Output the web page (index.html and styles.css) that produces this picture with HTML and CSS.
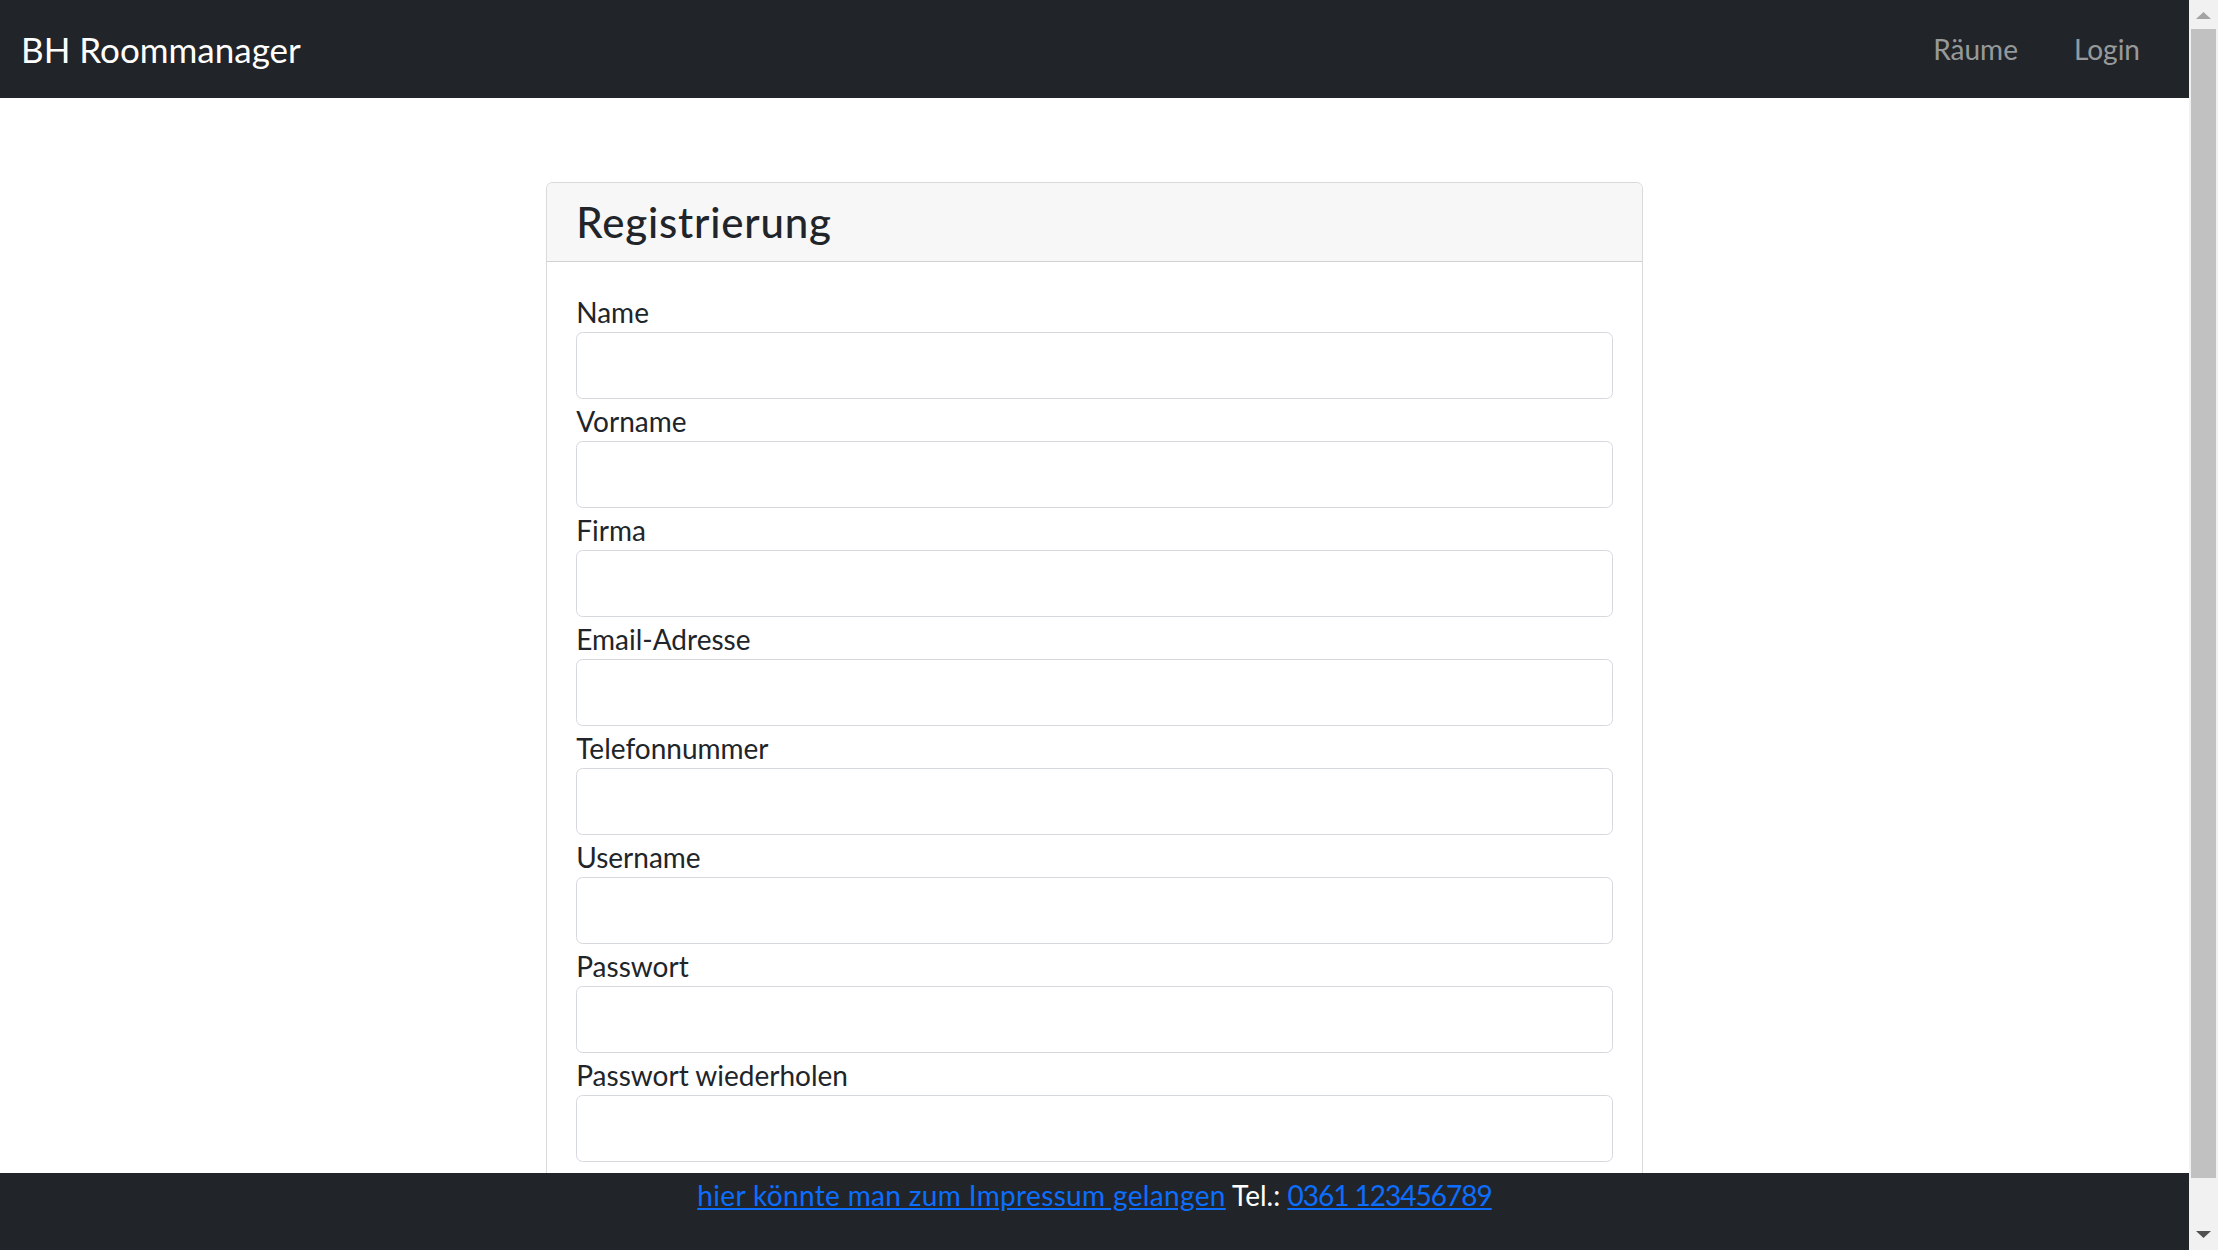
FILE: index.html
```html
<!DOCTYPE html>
<html lang="de">
<head>
<meta charset="utf-8">
<title>BH Roommanager</title>
<link rel="stylesheet" href="styles.css">
</head>
<body>
<div class="page">
  <nav class="navbar">
    <a class="brand" href="#">BH Roommanager</a>
    <ul class="nav">
      <li><a class="nav-link" href="#">Räume</a></li>
      <li><a class="nav-link" href="#">Login</a></li>
    </ul>
  </nav>

  <main class="main">
    <section class="card">
      <div class="card-header">
        <h4 class="card-title">Registrierung</h4>
      </div>
      <form class="card-body">
        <div class="group"><label for="name">Name</label><input id="name" class="form-control" type="text"></div>
        <div class="group"><label for="vorname">Vorname</label><input id="vorname" class="form-control" type="text"></div>
        <div class="group"><label for="firma">Firma</label><input id="firma" class="form-control" type="text"></div>
        <div class="group"><label for="email">Email-Adresse</label><input id="email" class="form-control" type="email"></div>
        <div class="group"><label for="tel">Telefonnummer</label><input id="tel" class="form-control" type="tel"></div>
        <div class="group"><label for="user">Username</label><input id="user" class="form-control" type="text"></div>
        <div class="group"><label for="pw">Passwort</label><input id="pw" class="form-control" type="password"></div>
        <div class="group"><label for="pw2">Passwort wiederholen</label><input id="pw2" class="form-control" type="password"></div>
      </form>
    </section>
  </main>

  <footer class="footer">
    <a class="imp" href="#">hier könnte man zum Impressum gelangen</a> Tel.: <a class="phone" href="#">0361 123456789</a>
  </footer>
</div>

<div class="scrollbar" aria-hidden="true">
  <div class="sb-btn">
    <svg width="29" height="29" viewBox="0 0 29 29"><polygon points="7,19 22,19 14.5,12" fill="#a3a3a3"/></svg>
  </div>
  <div class="sb-track"><div class="sb-thumb"></div></div>
  <div class="sb-btn">
    <svg width="29" height="29" viewBox="0 0 29 29"><polygon points="7,10 22,10 14.5,17" fill="#505050"/></svg>
  </div>
</div>
</body>
</html>
```
FILE: styles.css
```css
html {
  font-size: 28px;
}
body {
  margin: 0;
  display: flex;
  align-items: flex-start;
  font-family: "Lato", "Open Sans", sans-serif;
  font-size: 28px;
  line-height: 42px;
  color: #212529;
  background: #fff;
}
.page {
  flex: 1;
  min-width: 0;
}

/* imitation of the window scrollbar */
.scrollbar {
  flex: 0 0 29px;
  height: 100vh;
  display: flex;
  flex-direction: column;
  background: #f1f1f1;
}
.sb-btn {
  height: 29px;
  flex: 0 0 29px;
}
.sb-btn svg {
  display: block;
}
.sb-track {
  flex: 1;
  padding: 0 2px;
}
.sb-thumb {
  height: 1149px;
  background: #c1c1c1;
}

/* navbar */
.navbar {
  display: flex;
  align-items: center;
  justify-content: space-between;
  height: 98px;
  box-sizing: border-box;
  padding: 14px 21px;
  background: #212529;
}
.brand {
  font-size: 35px;
  line-height: 52.5px;
  padding: 8.75px 0;
  color: #fff;
  text-decoration: none;
  white-space: nowrap;
}
.nav {
  display: flex;
  list-style: none;
  margin: 0;
  padding: 0;
}
.nav-link {
  display: block;
  padding: 14px 28px;
  line-height: 42px;
  color: rgba(255, 255, 255, 0.55);
  text-decoration: none;
}

/* card */
.main {
  padding: 84px 0 28px;
}
.card {
  width: 50%;
  margin: 0 auto;
  border: 1px solid rgba(0, 0, 0, 0.15);
  border-radius: 6.5px;
  background: #fff;
}
.card-header {
  padding: 14px 29px;
  background: #f7f7f7;
  border-bottom: 1px solid rgba(0, 0, 0, 0.15);
  border-radius: 5.5px 5.5px 0 0;
}
.card-title {
  margin: 0;
  font-size: 42px;
  line-height: 50.4px;
  font-weight: 500;
  letter-spacing: 0.8px;
}
.card-body {
  display: flex;
  flex-direction: column;
  padding: 28px 29px 108px;
}
.group {
  display: flex;
  flex-direction: column;
}
.group label {
  display: block;
  line-height: 42px;
  padding-top: 1px;
  margin-bottom: -1px;
}
.form-control {
  display: block;
  width: 100%;
  height: 67px;
  box-sizing: border-box;
  padding: 10.5px 21px;
  font: inherit;
  border: 1px solid #d5d9de;
  border-radius: 6.5px;
  background: #fff;
  color: #212529;
  margin: 0;
}

/* footer */
.footer {
  position: fixed;
  left: 0;
  right: 29px;
  bottom: 0;
  height: 77px;
  box-sizing: border-box;
  padding-top: 1px;
  background: #212529;
  color: #fff;
  text-align: center;
  line-height: 42px;
}
.footer a {
  color: #0d6efd;
}
.imp {
  letter-spacing: 0.35px;
}
.phone {
  letter-spacing: -1px;
}
```
